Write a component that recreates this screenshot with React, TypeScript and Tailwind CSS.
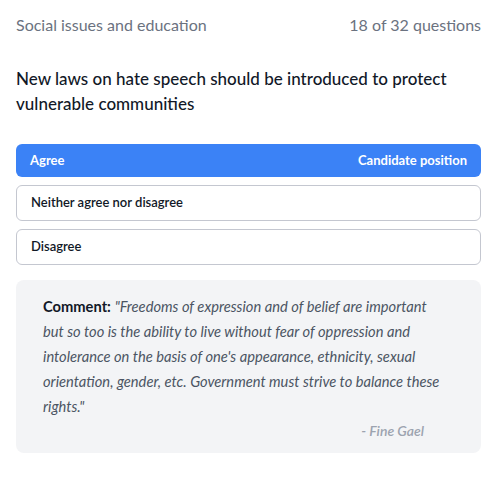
const options = [
  { label: 'Agree', candidate: true },
  { label: 'Neither agree nor disagree', candidate: false },
  { label: 'Disagree', candidate: false },
];

export default function App() {
  return (
    <div className="min-h-screen bg-white px-4 pt-[13px] font-['Lato',sans-serif]">
      {/* Header */}
      <div className="flex items-center justify-between text-[16px] leading-[24px] text-[#6b7280]">
        <span>Social issues and education</span>
        <span>18 of 32 questions</span>
      </div>

      {/* Question */}
      <h2 className="mt-[29px] text-[17px] font-medium leading-[25px] text-[#111827]">
        New laws on hate speech should be introduced to protect vulnerable communities
      </h2>

      {/* Options */}
      <div className="mt-[28px] flex flex-col gap-2">
        {options.map((opt) =>
          opt.candidate ? (
            <button
              key={opt.label}
              className="flex h-[33px] items-center justify-between rounded-md bg-[#3b82f6] px-[14px] text-[13px] font-bold text-white"
            >
              <span>{opt.label}</span>
              <span>Candidate position</span>
            </button>
          ) : (
            <button
              key={opt.label}
              className="flex h-[36px] items-center rounded-md border border-[#c4c7d0] bg-white px-[14px] text-[13px] font-semibold text-[#111827]"
            >
              {opt.label}
            </button>
          )
        )}
      </div>

      {/* Comment */}
      <div className="mt-[15px] rounded-lg bg-[#f3f4f6] pb-[12px] pl-[27px] pr-[40px] pt-[14px]">
        <p className="text-[14.7px] leading-[25px] text-[#4b5563]">
          <span className="font-bold not-italic text-[#111827]">Comment:</span>{' '}
          <span className="italic">
            "Freedoms of expression and of belief are important but so too is the ability to live without fear of
            oppression and intolerance on the basis of one's appearance, ethnicity, sexual orientation, gender, etc.
            Government must strive to balance these rights."
          </span>
        </p>
        <p className="mr-[17px] mt-[2px] text-right text-[14px] font-semibold italic leading-[20px] text-[#9ca3af]">
          - Fine Gael
        </p>
      </div>
    </div>
  );
}
